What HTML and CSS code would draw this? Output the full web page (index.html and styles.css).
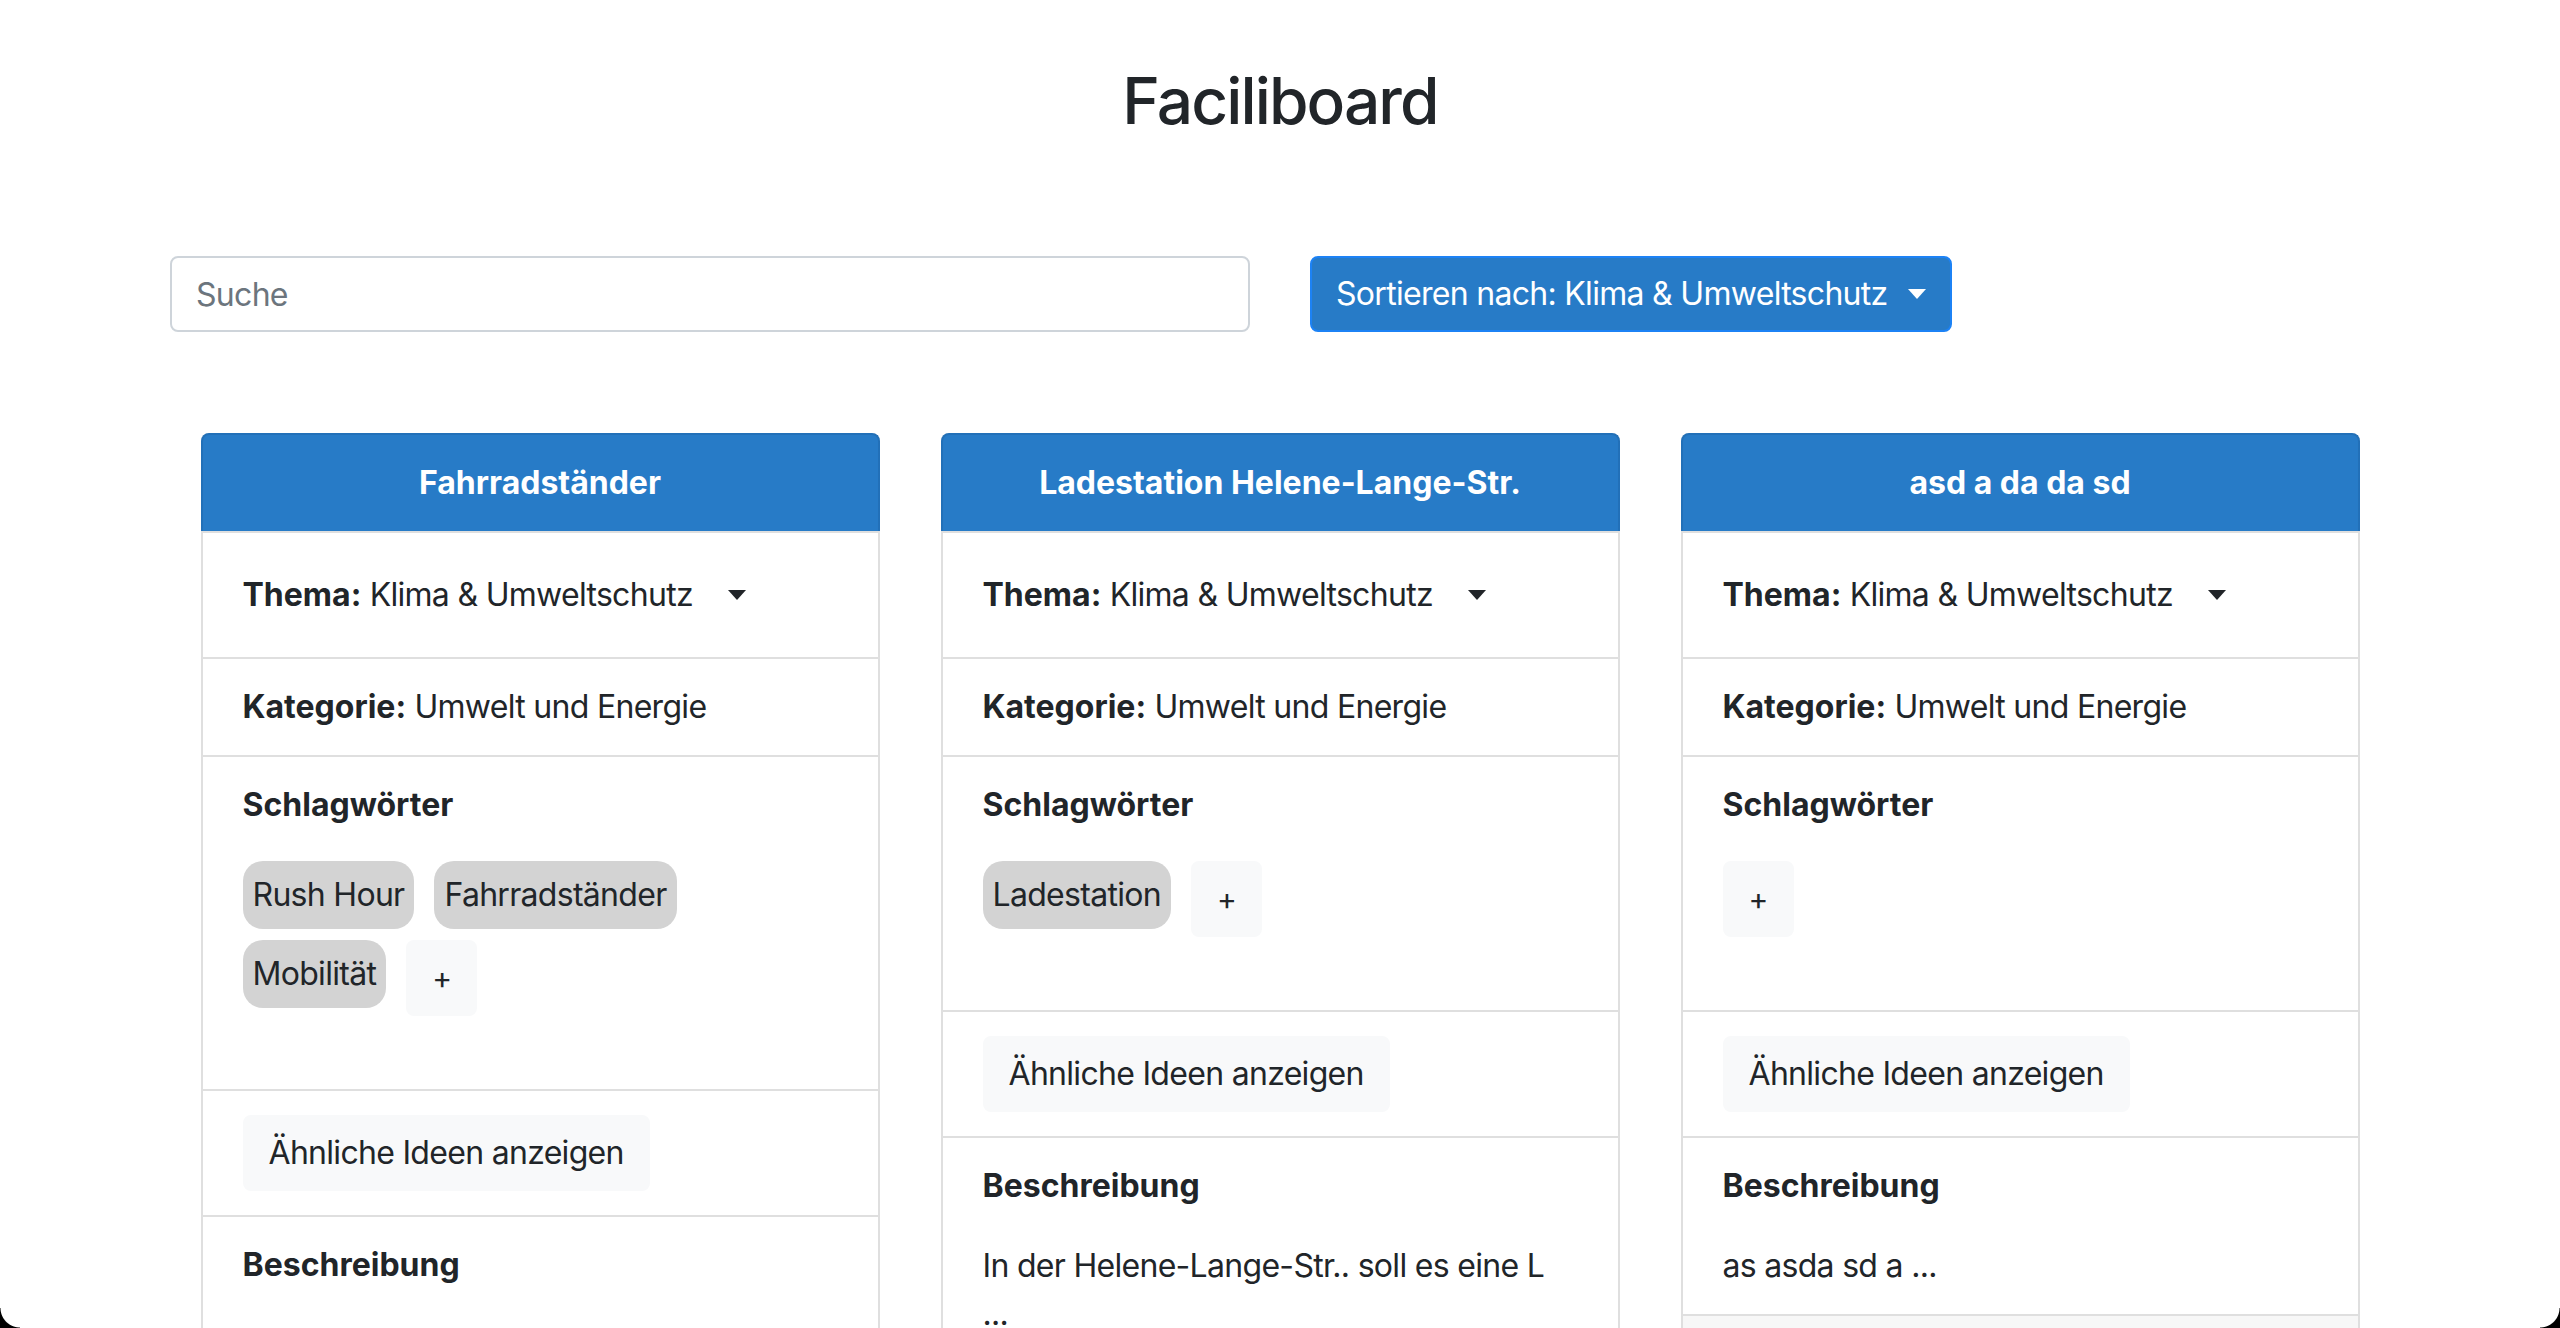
FILE: index.html
```html
<!DOCTYPE html>
<html lang="de">
<head>
<meta charset="utf-8">
<title>Faciliboard</title>
<link rel="stylesheet" href="styles.css">
</head>
<body>
<div class="container">
  <h1 class="title">Faciliboard</h1>
  <div class="toolbar">
    <div class="toolbar-col">
      <input class="search" type="text" placeholder="Suche">
    </div>
    <div class="toolbar-col">
      <button class="sort-btn">Sortieren nach: Klima &amp; Umweltschutz<span class="caret caret-white"></span></button>
    </div>
  </div>
</div>

<div class="board">
  <div class="card">
    <div class="card-header">Fahrradständer</div>
    <div class="item item-theme">
      <b>Thema:</b>&nbsp;<span class="theme-value">Klima &amp; Umweltschutz</span><span class="caret caret-dark"></span>
    </div>
    <div class="item"><b>Kategorie:</b> Umwelt und Energie</div>
    <div class="item item-tags">
      <div class="section-title">Schlagwörter</div>
      <div class="tags">
        <span class="tag">Rush Hour</span>
        <span class="tag">Fahrradständer</span>
        <span class="tag">Mobilität</span>
        <button class="btn-light btn-plus">+</button>
      </div>
    </div>
    <div class="item"><button class="btn-light">Ähnliche Ideen anzeigen</button></div>
    <div class="item">
      <div class="section-title">Beschreibung</div>
      <p class="desc">Es sollen mehr Fahrradständer ...</p>
    </div>
    <div class="card-footer"></div>
  </div>

  <div class="card">
    <div class="card-header">Ladestation Helene-Lange-Str.</div>
    <div class="item item-theme">
      <b>Thema:</b>&nbsp;<span class="theme-value">Klima &amp; Umweltschutz</span><span class="caret caret-dark"></span>
    </div>
    <div class="item"><b>Kategorie:</b> Umwelt und Energie</div>
    <div class="item item-tags">
      <div class="section-title">Schlagwörter</div>
      <div class="tags">
        <span class="tag">Ladestation</span>
        <button class="btn-light btn-plus">+</button>
      </div>
    </div>
    <div class="item"><button class="btn-light">Ähnliche Ideen anzeigen</button></div>
    <div class="item">
      <div class="section-title">Beschreibung</div>
      <p class="desc">In der Helene-Lange-Str.. soll es eine L<br>...</p>
    </div>
    <div class="card-footer"></div>
  </div>

  <div class="card">
    <div class="card-header">asd a da da sd</div>
    <div class="item item-theme">
      <b>Thema:</b>&nbsp;<span class="theme-value">Klima &amp; Umweltschutz</span><span class="caret caret-dark"></span>
    </div>
    <div class="item"><b>Kategorie:</b> Umwelt und Energie</div>
    <div class="item item-tags">
      <div class="section-title">Schlagwörter</div>
      <div class="tags">
        <button class="btn-light btn-plus">+</button>
      </div>
    </div>
    <div class="item"><button class="btn-light">Ähnliche Ideen anzeigen</button></div>
    <div class="item">
      <div class="section-title">Beschreibung</div>
      <p class="desc">as asda sd a ...</p>
    </div>
    <div class="card-footer"></div>
  </div>
</div>

<div class="corner corner-bl"></div>
<div class="corner corner-br"></div>
</body>
</html>
```

FILE: styles.css
```css
* { box-sizing: border-box; }

html, body {
  margin: 0;
  padding: 0;
  background: #fff;
}

body {
  font-family: Inter, "Noto Sans", "Liberation Sans", sans-serif;
  font-size: 32px;
  line-height: 48px;
  color: #212529;
  letter-spacing: -0.7px;
  padding-bottom: 200px;
}

b, .card-header, .section-title { letter-spacing: 0; }

.container {
  width: 2280px;
  margin: 0 auto;
  padding: 0 30px;
}

.title {
  margin: 0;
  padding-top: 62px;
  font-size: 64px;
  line-height: 77px;
  font-weight: 500;
  text-align: center;
  letter-spacing: -1.9px;
}

.toolbar {
  display: grid;
  grid-template-columns: 1fr 1fr;
  column-gap: 60px;
  margin-top: 117px;
}

.search {
  width: 100%;
  height: 76px;
  padding: 0 24px;
  border: 2px solid #ced4da;
  border-radius: 8px;
  font-family: inherit;
  font-size: 32px;
  letter-spacing: -0.7px;
  color: #495057;
  outline: none;
}

.search::placeholder { color: #6c757d; }

.sort-btn {
  height: 76px;
  padding: 0 24px;
  border: 2px solid #1c82f5;
  border-radius: 8px;
  background: #277bc7;
  color: #fff;
  font-family: inherit;
  font-size: 32px;
  line-height: 48px;
  letter-spacing: -0.7px;
  display: inline-flex;
  align-items: center;
}

.caret {
  display: inline-block;
  width: 0;
  height: 0;
  border-left: 9px solid transparent;
  border-right: 9px solid transparent;
  border-top: 10px solid currentColor;
}

.caret-white { margin-left: 20px; color: #fff; }

.board {
  display: flex;
  justify-content: center;
  gap: 61px;
  margin-top: 101px;
}

.card {
  width: 679px;
  border: 2px solid #dfdfdf;
  border-radius: 8px;
  background: #fff;
  display: flex;
  flex-direction: column;
  align-self: flex-start;
}

.card-header {
  margin: -2px -2px 0;
  padding: 24px 40px;
  background: #277bc7;
  border: 2px solid #2270b8;
  border-bottom: none;
  border-radius: 8px 8px 0 0;
  color: #fff;
  font-weight: 700;
  text-align: center;
}

.item {
  padding: 24px 40px;
  border-top: 2px solid #dfdfdf;
}

.item-theme {
  display: flex;
  align-items: center;
  min-height: 126px;
}

.theme-value { white-space: nowrap; }

.caret-dark { margin-left: 35px; color: #212529; }

.section-title {
  font-weight: 700;
  margin-bottom: 32px;
}

.tags {
  display: flex;
  flex-wrap: wrap;
  align-items: flex-start;
  gap: 11px 20px;
  padding-bottom: 49px;
}

.tag {
  background: #d3d3d3;
  border-radius: 20px;
  padding: 10px;
  line-height: 48px;
  white-space: nowrap;
}

.btn-light {
  display: inline-block;
  height: 76px;
  padding: 12px 24px;
  border: 2px solid #f8f9fa;
  border-radius: 8px;
  background: #f8f9fa;
  color: #212529;
  font-family: inherit;
  font-size: 32px;
  line-height: 48px;
  letter-spacing: -0.7px;
}

.btn-plus {
  padding: 12px 24px;
  font-size: 30px;
}

.desc {
  margin: 0;
}

.card-footer {
  height: 120px;
  background: #f7f7f7;
  border-top: 2px solid #dfdfdf;
  border-radius: 0 0 6px 6px;
}

.corner {
  position: fixed;
  bottom: 0;
  width: 20px;
  height: 20px;
  z-index: 10;
}

.corner-bl {
  left: 0;
  background: radial-gradient(circle at 100% 0, transparent 19px, #000 20px);
}

.corner-br {
  right: 0;
  background: radial-gradient(circle at 0 0, transparent 19px, #000 20px);
}
```
